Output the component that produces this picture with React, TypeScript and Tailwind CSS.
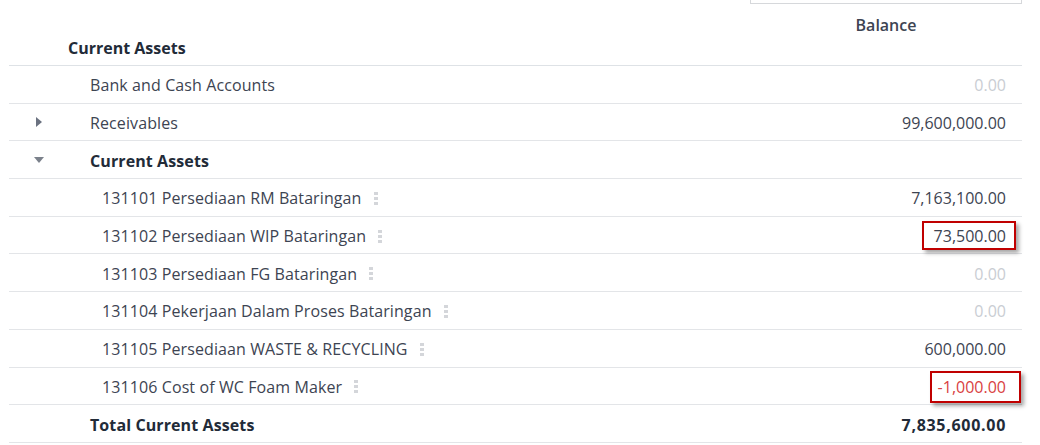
import type { ReactNode } from "react";

type Row = {
  label: string;
  value?: string;
  level: 1 | 2;
  bold?: boolean;
  caret?: "right" | "down";
  kebab?: boolean;
  tone?: "zero" | "normal" | "neg";
  mark?: "a" | "b";
};

const rows: Row[] = [
  { label: "Bank and Cash Accounts", value: "0.00", level: 1, tone: "zero" },
  { label: "Receivables", value: "99,600,000.00", level: 1, caret: "right" },
  { label: "Current Assets", level: 1, bold: true, caret: "down" },
  { label: "131101 Persediaan RM Bataringan", value: "7,163,100.00", level: 2, kebab: true },
  { label: "131102 Persediaan WIP Bataringan", value: "73,500.00", level: 2, kebab: true, mark: "a" },
  { label: "131103 Persediaan FG Bataringan", value: "0.00", level: 2, kebab: true, tone: "zero" },
  { label: "131104 Pekerjaan Dalam Proses Bataringan", value: "0.00", level: 2, kebab: true, tone: "zero" },
  { label: "131105 Persediaan WASTE & RECYCLING", value: "600,000.00", level: 2, kebab: true },
  { label: "131106 Cost of WC Foam Maker", value: "-1,000.00", level: 2, kebab: true, tone: "neg", mark: "b" },
  { label: "Total Current Assets", value: "7,835,600.00", level: 1, bold: true },
];

function Caret({ dir }: { dir: "right" | "down" }) {
  return dir === "right" ? (
    <svg width="6" height="10" viewBox="0 0 6 10" className="ml-[1px] block">
      <path d="M0 0 L6 5 L0 10 Z" fill="#6b7280" />
    </svg>
  ) : (
    <svg width="10" height="6" viewBox="0 0 10 6" className="-ml-[1px] block">
      <path d="M0 0 L10 0 L5 6 Z" fill="#7b818b" />
    </svg>
  );
}

function Kebab() {
  return (
    <span className="ml-[12px] flex flex-col gap-[2px]">
      <span className="block h-[3px] w-[4px] bg-[#d4d6da]" />
      <span className="block h-[3px] w-[4px] bg-[#d4d6da]" />
      <span className="block h-[3px] w-[4px] bg-[#d4d6da]" />
    </span>
  );
}

// red annotation boxes drawn over the screenshot values
function Marked({ kind, children }: { kind: "a" | "b"; children: ReactNode }) {
  const box =
    kind === "a"
      ? "-left-[12px] -right-[10px] -top-[3px] -bottom-[2px]"
      : "-left-[8px] -right-[15px] -top-[4px] -bottom-[4px]";
  return (
    <span className="relative inline-block">
      {children}
      <span
        className={`pointer-events-none absolute ${box} border-2 border-[#c00000] shadow-[3px_3px_4px_rgba(0,0,0,0.35)]`}
      />
    </span>
  );
}

export default function App() {
  return (
    <div
      className="h-[445px] w-[1040px] overflow-hidden bg-white text-[16px] text-[#3d4452]"
      style={{ fontFamily: '"Open Sans", "Noto Sans", sans-serif' }}
    >
      <div className="ml-[9px] w-[1013px]">
        {/* header */}
        <div className="flex">
          <div className="flex-1" />
          <div className="w-[272px]">
            <div className="h-[4px] border-x border-b border-[#d6d8db]" />
          </div>
        </div>
        <div className="flex h-[62px] border-b border-[#dee2e6]">
          <div className="flex flex-1 items-end pb-[5px] pl-[59px] font-bold text-[#222b38]">
            Current Assets
          </div>
          <div className="w-[272px] pt-[9px] text-center font-semibold text-[#3d4452]">Balance</div>
        </div>

        {rows.map((r) => {
          const valueColor =
            r.tone === "zero" ? "text-[#c9cdd3]" : r.tone === "neg" ? "text-[#d9413f]" : "";
          return (
            <div key={r.label} className="flex h-[37.7px] items-center border-b border-[#e3e5e8]">
              <div className="flex w-[81px] items-center justify-start pl-[26px]">
                {r.caret && <Caret dir={r.caret} />}
              </div>
              <div
                className={`flex flex-1 items-center pt-[2px] tracking-[0.1px] ${
                  r.level === 2 ? "pl-[12px]" : ""
                } ${r.bold ? "font-bold text-[#222b38]" : ""}`}
              >
                <span>{r.label}</span>
                {r.kebab && <Kebab />}
              </div>
              <div
                className={`w-[272px] pr-[16px] pt-[2px] text-right ${
                  r.bold ? "font-bold tracking-[0.7px] text-[#222b38]" : ""
                } ${valueColor}`}
              >
                {r.value &&
                  (r.mark ? <Marked kind={r.mark}>{r.value}</Marked> : <span>{r.value}</span>)}
              </div>
            </div>
          );
        })}
      </div>
    </div>
  );
}
